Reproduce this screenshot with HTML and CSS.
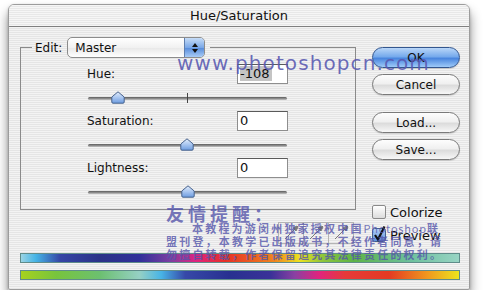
FILE: index.html
```html
<!DOCTYPE html>
<html>
<head>
<meta charset="utf-8">
<link rel="stylesheet" href="styles.css">
</head>
<body>
<div class="window">
  <div class="titlebar">Hue/Saturation</div>
  <div class="content">
    <div class="main">
      <fieldset class="group">
        <legend class="edit">
          <span class="edit-label">Edit:</span>
          <div class="popup">
            <span class="popup-label">Master</span>
            <span class="popup-arrows">
              <svg width="8" height="12" viewBox="0 0 8 12"><path d="M4 1 L7 5 L1 5 Z M4 11 L7 7 L1 7 Z" fill="#111"/></svg>
            </span>
          </div>
        </legend>
        <div class="rows">
          <div class="row">
            <div class="line"><span>Hue:</span><div class="field"><span class="sel">-108</span></div></div>
            <div class="slider">
              <span class="tick"></span>
              <svg class="thumb" style="left:24px" width="14" height="13" viewBox="0 0 14 13"><defs><linearGradient id="tg1" x1="0" y1="0" x2="0" y2="1"><stop offset="0" stop-color="#e4eefc"/><stop offset="0.5" stop-color="#a9c6f0"/><stop offset="1" stop-color="#6d9ce0"/></linearGradient></defs><path d="M7 0.8 L13.2 6 L13.2 11 Q13.2 12.2 12 12.2 L2 12.2 Q0.8 12.2 0.8 11 L0.8 6 Z" fill="url(#tg1)" stroke="#46618c" stroke-width="1"/></svg>
            </div>
          </div>
          <div class="row">
            <div class="line"><span>Saturation:</span><div class="field">0</div></div>
            <div class="slider">
              <svg class="thumb" style="left:93px" width="14" height="13" viewBox="0 0 14 13"><defs><linearGradient id="tg2" x1="0" y1="0" x2="0" y2="1"><stop offset="0" stop-color="#e4eefc"/><stop offset="0.5" stop-color="#a9c6f0"/><stop offset="1" stop-color="#6d9ce0"/></linearGradient></defs><path d="M7 0.8 L13.2 6 L13.2 11 Q13.2 12.2 12 12.2 L2 12.2 Q0.8 12.2 0.8 11 L0.8 6 Z" fill="url(#tg2)" stroke="#46618c" stroke-width="1"/></svg>
            </div>
          </div>
          <div class="row">
            <div class="line"><span>Lightness:</span><div class="field">0</div></div>
            <div class="slider">
              <svg class="thumb" style="left:94px" width="14" height="13" viewBox="0 0 14 13"><defs><linearGradient id="tg3" x1="0" y1="0" x2="0" y2="1"><stop offset="0" stop-color="#e4eefc"/><stop offset="0.5" stop-color="#a9c6f0"/><stop offset="1" stop-color="#6d9ce0"/></linearGradient></defs><path d="M7 0.8 L13.2 6 L13.2 11 Q13.2 12.2 12 12.2 L2 12.2 Q0.8 12.2 0.8 11 L0.8 6 Z" fill="url(#tg3)" stroke="#46618c" stroke-width="1"/></svg>
            </div>
          </div>
        </div>
      </fieldset>
      <div class="side">
        <div class="btn btn-ok">OK</div>
        <div class="btn btn-gap">Cancel</div>
        <div class="btn btn-group">Load...</div>
        <div class="btn btn-gap">Save...</div>
        <div class="checks">
          <div class="check"><span class="box"></span><span>Colorize</span></div>
          <div class="check check-gap">
            <svg class="box-on" width="14" height="14" viewBox="0 0 14 14"><defs><linearGradient id="cb" x1="0" y1="0" x2="0" y2="1"><stop offset="0" stop-color="#b6d2f6"/><stop offset="1" stop-color="#5c90dc"/></linearGradient></defs><rect x="0.5" y="0.5" width="13" height="13" rx="2" fill="url(#cb)" stroke="#45608c"/><path d="M3 7 L6 11.5 L12.5 -1.5" fill="none" stroke="#111" stroke-width="2.2"/></svg>
            <span>Preview</span>
          </div>
        </div>
      </div>
    </div>
    <div class="bars">
      <div class="bar bar-top"></div>
      <div class="bar bar-bottom"></div>
    </div>
  </div>

  <svg class="droppers" width="76" height="22" viewBox="0 0 76 22">
    <g fill="none" stroke="#b4b4b4" stroke-width="1">
      <rect x="0.5" y="0.5" width="75" height="21"/>
      <line x1="25.5" y1="0.5" x2="25.5" y2="21.5"/>
      <line x1="50.5" y1="0.5" x2="50.5" y2="21.5"/>
    </g>
    <g fill="none" stroke="#555" stroke-width="1" opacity="0.75">
      <path d="M7 17 L16 8"/><path d="M15 6 L19 4 L20 5 L18 9 Z" fill="#555"/>
      <path d="M32 17 L41 8"/><path d="M40 6 L44 4 L45 5 L43 9 Z" fill="#555"/>
      <path d="M57 17 L66 8"/><path d="M65 6 L69 4 L70 5 L68 9 Z" fill="#555"/>
    </g>
  </svg>

  <div class="wm-url">www.photoshopcn.com</div>
  <div class="wm-note">
    <div class="wm-head">友情提醒：</div>
    <div class="wm-line wm-first">本教程为游闵州独家授权中国<span class="wm-latin">Photoshop</span>联</div>
    <div class="wm-line">盟刊登，本教学已出版成书，不经作者同意，请</div>
    <div class="wm-line">勿擅自转载，作者保留追究其法律责任的权利。</div>
  </div>
</div>
</body>
</html>
```
FILE: styles.css
```css
html, body {
  margin: 0;
  padding: 0;
  background: #ffffff;
}

body {
  font-family: "DejaVu Sans", "Liberation Sans", sans-serif;
  color: #111;
  padding-top: 4px;
}

.window {
  position: relative;
  margin-left: 8px;
  width: 462px;
  height: 286px;
  box-sizing: border-box;
  border: 1px solid #9c9c9c;
  border-radius: 6px 6px 2px 2px;
  background: repeating-linear-gradient(to bottom, #f3f3f3 0 1px, #e5e5e5 1px 2px);
  box-shadow: 0 8px 12px rgba(0, 0, 0, 0.45), 0 1px 3px rgba(0, 0, 0, 0.2);
}

.titlebar {
  height: 21px;
  line-height: 21px;
  text-align: center;
  font-size: 13px;
  color: #111;
  border-bottom: 1px solid #808080;
  border-radius: 5px 5px 0 0;
  background: repeating-linear-gradient(to bottom, #f6f6f6 0 1px, #e8e8e8 1px 2px);
}

.content {
  padding: 10px 9px 0 11px;
}

.main {
  display: grid;
  grid-template-columns: 336px 88px;
  column-gap: 16px;
  align-items: start;
}

.group {
  margin: 0;
  min-width: 0;
  padding: 6px 0 11px 11px;
  border: 1px solid #8a8a8a;
}

.edit {
  display: flex;
  align-items: center;
  padding: 0 5px 0 3px;
  font-size: 12px;
}

.edit-label {
  margin-right: 5px;
}

.popup {
  display: flex;
  align-items: center;
  width: 138px;
  height: 21px;
  box-sizing: border-box;
  border: 1px solid #8c8c8c;
  border-radius: 5px;
  background: linear-gradient(#ffffff, #f1f1f1 50%, #e9e9e9 55%, #ffffff);
  overflow: hidden;
}

.popup-label {
  flex: 1;
  padding-left: 7px;
  font-size: 12px;
}

.popup-arrows {
  width: 19px;
  height: 100%;
  display: flex;
  align-items: center;
  justify-content: center;
  border-left: 1px solid #5f7fae;
  background: linear-gradient(#c6dcf7, #7aa8e8 50%, #5b8fdc 55%, #a8cbf6);
}

.rows {
  margin-left: 55px;
  width: 201px;
}

.row + .row {
  margin-top: 7px;
}

.line {
  display: flex;
  align-items: center;
  justify-content: space-between;
  height: 20px;
  font-size: 12px;
}

.field {
  width: 51px;
  height: 20px;
  box-sizing: border-box;
  border: 1px solid #8e8e8e;
  border-top-color: #5a5a5a;
  background: #ffffff;
  font-size: 13px;
  line-height: 18px;
  padding-left: 2px;
}

.sel {
  background: #c4c4c4;
  padding-right: 2px;
}

.slider {
  position: relative;
  height: 13px;
  margin-top: 7px;
}

.slider::before {
  content: "";
  position: absolute;
  left: 1px;
  right: 1px;
  top: 6px;
  height: 3px;
  border-radius: 2px;
  background: linear-gradient(#5c5c5c, #8a8a8a 50%, #c4c4c4);
}

.tick {
  position: absolute;
  left: 100px;
  top: 2px;
  width: 1px;
  height: 10px;
  background: #444;
}

.thumb {
  position: absolute;
  top: 0;
}

.side {
  display: flex;
  flex-direction: column;
  padding-top: 10px;
}

.btn {
  height: 21px;
  box-sizing: border-box;
  border: 1px solid #7a7a7a;
  border-radius: 11px;
  display: flex;
  align-items: center;
  justify-content: center;
  font-size: 12px;
  background: linear-gradient(#fdfdfd, #f0f0f0 45%, #dcdcdc 55%, #f7f7f7);
  box-shadow: 0 1px 1px rgba(0, 0, 0, 0.15);
}

.btn-ok {
  border-color: #33568e;
  background: linear-gradient(#b9d6f8, #76aaec 45%, #4a86de 55%, #9ecaf8);
}

.btn-gap {
  margin-top: 6px;
}

.btn-group {
  margin-top: 17px;
}

.checks {
  margin-top: 45px;
}

.check {
  display: flex;
  align-items: center;
  height: 14px;
  font-size: 13px;
}

.check-gap {
  margin-top: 9px;
}

.box {
  width: 14px;
  height: 14px;
  box-sizing: border-box;
  border: 1px solid #8a8a8a;
  border-radius: 2px;
  background: linear-gradient(#ffffff, #dcdcdc);
  margin-right: 4px;
}

.box-on {
  margin-right: 4px;
  overflow: visible;
}

.bars {
  display: flex;
  flex-direction: column;
  gap: 7px;
  margin-top: 11px;
  width: 440px;
}

.bar {
  height: 10px;
  box-sizing: border-box;
  border: 1px solid #5f8c8a;
}

.bar-top {
  background: linear-gradient(to right,
    #9ad4e4 0%, #45b4e6 3.4%, #3545a5 9%, #2a3288 18%, #30309a 27%,
    #7a3ea2 34%, #e0237e 40%, #e63026 46.6%, #f0861e 58%, #ece21e 63.6%,
    #8cc43c 69%, #5eb446 76%, #6cc09c 88.6%, #98d4c4 100%);
}

.bar-bottom {
  background: linear-gradient(to right,
    #a6d21e 0%, #78c43c 8%, #6cc070 18%, #96d0c4 27%, #48b4e6 32%,
    #3648a8 37.5%, #283090 47.7%, #3a3298 57%, #8a40a2 62.5%, #e0247e 68%,
    #e63a3a 74%, #e43a22 84%, #f09a1e 93%, #ece41e 100%);
}

.droppers {
  position: absolute;
  left: 269px;
  top: 217px;
}

.wm-url {
  position: absolute;
  left: 168px;
  top: 46px;
  font-family: "DejaVu Sans", sans-serif;
  font-size: 20px;
  line-height: 24px;
  letter-spacing: 1.1px;
  color: rgba(88, 88, 176, 0.88);
  white-space: nowrap;
}

.wm-note {
  position: absolute;
  left: 157px;
  top: 199px;
  font-family: "Noto Sans CJK SC", "Noto Sans", sans-serif;
  color: rgba(84, 84, 170, 0.8);
  white-space: nowrap;
}

.wm-head {
  font-size: 18px;
  line-height: 18px;
  font-weight: 700;
  letter-spacing: 4px;
}

.wm-line {
  font-size: 11px;
  line-height: 13px;
  letter-spacing: 2.2px;
  font-weight: 700;
}

.wm-latin {
  letter-spacing: 0.8px;
  font-weight: 400;
}

.wm-first {
  text-indent: 26px;
}
```
